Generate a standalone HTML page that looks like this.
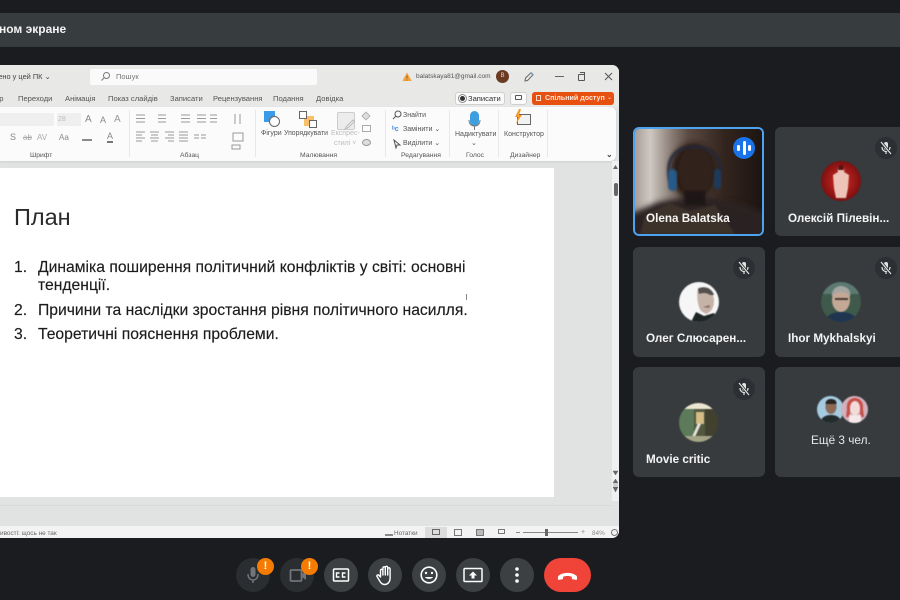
<!DOCTYPE html>
<html><head><meta charset="utf-8">
<style>
html,body{margin:0;padding:0;width:900px;height:600px;overflow:hidden;background:#1a1c20}
body{position:relative;font-family:"Liberation Sans","Noto Sans CJK SC",sans-serif}
.a{position:absolute;white-space:nowrap}
.rb{position:absolute;white-space:nowrap;font-size:7px;color:#555;line-height:9px}
.tile{position:absolute;background:#373b3e;border-radius:6px;overflow:hidden}
.name{position:absolute;color:#f4f4f4;font-size:11.7px;font-weight:bold;white-space:nowrap;line-height:15px}
.mute{position:absolute;width:22px;height:22px;border-radius:50%;background:#2c2f33}
.ctl{position:absolute;top:558px;width:34px;height:34px;border-radius:50%;background:#3c4043}
.ctl svg,.mute svg{position:absolute;left:0;top:0}
.dot{position:absolute;width:17px;height:17px;border-radius:50%;background:#f57c00;color:#fff;font-size:11px;font-weight:bold;text-align:center;line-height:17px}
.sep{position:absolute;top:110px;width:1px;height:47px;background:#e8e8e8}
.st{font-size:15.7px;line-height:18px;color:#1c1c1c;-webkit-text-stroke:.15px #1c1c1c}
#win{position:absolute;left:0;top:0;width:900px;height:600px;filter:blur(.35px)}
</style></head><body>

<div class="a" style="left:0;top:13px;width:900px;height:34px;background:#373c3f"></div>
<div class="a" style="left:-1px;top:21px;color:#f4f4f4;font-size:12px;font-weight:bold;line-height:17px">ном экране</div>

<div id="win">
<!-- window -->
<div class="a" style="left:0;top:65px;width:619px;height:473px;background:#e1e2e2;border-radius:0 7px 7px 0;overflow:hidden">
 <div class="a" style="left:0;top:0;width:619px;height:42px;background:#e8e8e7"></div>
 <div class="a" style="left:0;top:461px;width:619px;height:12px;background:#f3f3f3"></div>
 <div class="a" style="left:0;top:440px;width:612px;height:1px;background:#d9d9d9"></div>
</div>

<!-- title row -->
<div class="rb" style="left:-5px;top:72px;color:#444;font-size:7.4px">кено у цей ПК ⌄</div>
<div class="a" style="left:90px;top:69px;width:227px;height:16px;background:#fafafa;border-radius:2px"></div>
<svg class="a" style="left:100px;top:71px" width="11" height="11" viewBox="0 0 11 11"><circle cx="6.500" cy="4.500" r="3" fill="none" stroke="#777"/><path d="M4.300 6.700L1.500 9.500" stroke="#777"/></svg>
<div class="rb" style="left:116px;top:72px;font-size:7.5px;color:#777">Пошук</div>
<svg class="a" style="left:402px;top:72px" width="10" height="10" viewBox="0 0 10 10"><path d="M5 .5L9.700 9H.3z" fill="#f2a341"/><path d="M5 3.500v3M5 7.500v1" stroke="#7a4a10" stroke-width=".8"/></svg>
<div class="rb" style="left:416px;top:72px;font-size:6.500px;color:#555">balatskaya81@gmail.com</div>
<div class="a" style="left:496px;top:70px;width:13px;height:13px;border-radius:50%;background:#6b3a22;color:#e8d0c0;font-size:6px;line-height:13px;text-align:center">В</div>
<svg class="a" style="left:523px;top:71px" width="12" height="12" viewBox="0 0 12 12"><path d="M2 10l.5-3L8 1.800l2 2L4.500 9.500z" fill="none" stroke="#666"/><path d="M8 1.500l2 2" stroke="#4aa3e0"/></svg>
<div class="a" style="left:555px;top:76px;width:9px;height:1px;background:#666"></div>
<div class="a" style="left:578px;top:74px;width:5px;height:5px;border:1px solid #555;border-radius:1px;background:#e9e9e8"></div>
<div class="a" style="left:580px;top:72px;width:4px;height:4px;border-top:1px solid #555;border-right:1px solid #555"></div>
<svg class="a" style="left:604px;top:72px" width="9" height="9" viewBox="0 0 9 9"><path d="M1 1l7 7M8 1L1 8" stroke="#555"/></svg>

<!-- menu row -->
<div class="rb" style="left:-5px;top:94px;font-size:7.600px">ер</div>
<div class="rb" style="left:18px;top:94px;font-size:7.600px">Переходи</div>
<div class="rb" style="left:65px;top:94px;font-size:7.600px">Анімація</div>
<div class="rb" style="left:108px;top:94px;font-size:7.600px">Показ слайдів</div>
<div class="rb" style="left:170px;top:94px;font-size:7.600px">Записати</div>
<div class="rb" style="left:213px;top:94px;font-size:7.600px">Рецензування</div>
<div class="rb" style="left:273px;top:94px;font-size:7.600px">Подання</div>
<div class="rb" style="left:316px;top:94px;font-size:7.600px">Довідка</div>
<div class="a" style="left:455px;top:92px;width:50px;height:13px;background:#fafafa;border:1px solid #d0d0d0;border-radius:3px;box-sizing:border-box"></div>
<div class="a" style="left:460px;top:96px;width:5px;height:5px;border-radius:50%;background:#333;box-shadow:0 0 0 1px #fff,0 0 0 2px #888"></div>
<div class="rb" style="left:468px;top:94px;font-size:7.600px;color:#333">Записати</div>
<div class="a" style="left:510px;top:92px;width:17px;height:13px;background:#fafafa;border:1px solid #d0d0d0;border-radius:3px;box-sizing:border-box"></div>
<div class="a" style="left:515px;top:95px;width:7px;height:5px;border:1px solid #555;box-sizing:border-box;border-radius:1px"></div>
<div class="a" style="left:532px;top:92px;width:82px;height:13px;background:#e8500f;border-radius:3px"></div>
<div class="rb" style="left:545px;top:94px;font-size:7.100px;font-weight:bold;color:#ffe8dc">Спільний доступ</div>
<div class="a" style="left:536px;top:95px;width:5px;height:6px;border:1px solid #fcd9c8;box-sizing:border-box"></div>
<div class="rb" style="left:607px;top:94px;font-size:6px;color:#ffe8dc">⌄</div>

<!-- ribbon -->
<div class="a" style="left:0;top:107px;width:616px;height:54px;background:#fbfbfb;border-radius:0 6px 6px 0;box-shadow:0 1px 2px rgba(0,0,0,.08)"></div>
<div class="sep" style="left:129px"></div><div class="sep" style="left:255px"></div><div class="sep" style="left:385px"></div><div class="sep" style="left:449px"></div><div class="sep" style="left:498px"></div><div class="sep" style="left:547px"></div>

<!-- font group -->
<div class="a" style="left:0;top:113px;width:54px;height:13px;background:#efefef"></div>
<div class="a" style="left:57px;top:113px;width:24px;height:13px;background:#efefef;color:#bbb;font-size:7px;line-height:13px;text-indent:1px">28</div>
<div class="rb" style="left:85px;top:115px;font-size:10px;color:#888">A</div>
<div class="rb" style="left:100px;top:116px;font-size:9px;color:#888">A</div>
<div class="rb" style="left:114px;top:115px;font-size:10px;color:#999">A</div>
<div class="rb" style="left:10px;top:133px;font-size:9px;color:#888">S</div>
<div class="rb" style="left:23px;top:133px;font-size:8px;color:#aaa"><s>ab</s></div>
<div class="rb" style="left:37px;top:133px;font-size:8px;color:#aaa">AV</div>
<div class="rb" style="left:59px;top:133px;font-size:8px;color:#888">Aa</div>
<div class="a" style="left:82px;top:133px;width:10px;height:8px;border-bottom:2px solid #8a8a8a;box-sizing:border-box"></div>
<div class="rb" style="left:107px;top:132px;font-size:9px;color:#888;border-bottom:2px solid #777;line-height:9px">A</div>
<div class="rb" style="left:30px;top:151px;font-size:6.800px">Шрифт</div>
<div class="rb" style="left:180px;top:151px;font-size:6.800px">Абзац</div>

<!-- paragraph icons -->
<svg class="a" style="left:134px;top:111px" width="115" height="40" viewBox="0 0 115 40"><g stroke="#9a9a9a" stroke-width="1" fill="none">
<path d="M2 4h9M2 7.500h9M2 11h9M24 4h8M24 7.500h8M24 11h8M47 4h9M47 7.500h9M47 11h9M63 4h9M63 7.500h9M63 11h9M76 4h7M76 7.500h7M76 11h7"/>
<path d="M2 21h9M2 24h6M2 27h9M2 30h6M16 21h9M17 24h7M16 27h9M17 30h7M31 21h9M34 24h6M31 27h9M34 30h6M45 21h9M45 24h9M45 27h9M45 30h9M60 24h5M67 24h5M60 27h5M67 27h5"/>
<path d="M101 3v10M106 3v10"/><rect x="99" y="22" width="10" height="8"/><rect x="98" y="34" width="8" height="4"/></g></svg>

<!-- drawing group -->
<div class="a" style="left:264px;top:111px;width:11px;height:11px;background:#3b9be8"></div>
<div class="a" style="left:269px;top:116px;width:11px;height:11px;border-radius:50%;background:#fff;border:1px solid #666;box-sizing:border-box"></div>
<div class="rb" style="left:261px;top:129px;font-size:7px">Фігури</div>
<div class="a" style="left:304px;top:116px;width:10px;height:10px;background:#f9c06a;box-sizing:border-box"></div>
<div class="a" style="left:299px;top:111px;width:8px;height:8px;background:#fff;border:1px solid #666;box-sizing:border-box"></div>
<div class="a" style="left:309px;top:120px;width:8px;height:8px;background:#fff;border:1px solid #666;box-sizing:border-box"></div>
<div class="rb" style="left:284px;top:129px;font-size:6.900px">Упорядкувати</div>
<div class="a" style="left:337px;top:112px;width:16px;height:16px;background:#ececec;border:1px solid #ccc;border-radius:2px"></div>
<svg class="a" style="left:344px;top:118px" width="12" height="12" viewBox="0 0 12 12"><path d="M1 11l2-3 6-6 1.500 1.500-6 6z" fill="#eee" stroke="#bbb"/></svg>
<div class="rb" style="left:331px;top:129px;font-size:7px;color:#bbb">Експрес-</div>
<div class="rb" style="left:334px;top:139px;font-size:7px;color:#bbb">стилі ˅</div>
<div class="a" style="left:362px;top:112px;width:8px;height:8px;background:#ddd;border:1px solid #aaa;box-sizing:border-box;transform:rotate(45deg) scale(.8)"></div>
<div class="a" style="left:362px;top:125px;width:9px;height:7px;border:1px solid #aaa;box-sizing:border-box"></div>
<div class="a" style="left:362px;top:139px;width:9px;height:7px;border:1px solid #999;border-radius:50%;background:#ddd;box-sizing:border-box"></div>
<div class="rb" style="left:300px;top:151px;font-size:6.800px">Малювання</div>

<!-- editing -->
<svg class="a" style="left:392px;top:110px" width="10" height="10" viewBox="0 0 10 10"><circle cx="6" cy="4" r="3" fill="none" stroke="#555"/><path d="M3.800 6.200L1 9" stroke="#555"/></svg>
<div class="rb" style="left:403px;top:111px;font-size:7px">Знайти</div>
<div class="rb" style="left:392px;top:125px;font-size:7px;color:#4a8fe0;font-weight:bold">ᵇc</div>
<div class="rb" style="left:403px;top:125px;font-size:7px">Замінити ⌄</div>
<svg class="a" style="left:393px;top:139px" width="9" height="10" viewBox="0 0 9 10"><path d="M1 1l6 5H4l-1 3z" fill="none" stroke="#555"/></svg>
<div class="rb" style="left:403px;top:139px;font-size:7px">Виділити ⌄</div>
<div class="rb" style="left:401px;top:151px;font-size:6.800px">Редагування</div>

<!-- voice -->
<div class="a" style="left:470px;top:111px;width:9px;height:15px;background:#3d9fe0;border-radius:5px"></div>
<svg class="a" style="left:467px;top:118px" width="15" height="14" viewBox="0 0 15 14"><path d="M2 2c0 4 2.500 6 5.500 6S13 6 13 2M7.500 8v4" fill="none" stroke="#777"/></svg>
<div class="rb" style="left:455px;top:130px;font-size:7px">Надиктувати</div>
<div class="rb" style="left:471px;top:139px;font-size:7px">⌄</div>
<div class="rb" style="left:466px;top:151px;font-size:6.800px">Голос</div>

<!-- designer -->
<div class="a" style="left:517px;top:114px;width:14px;height:11px;background:#f2f2f2;border:1px solid #666;box-sizing:border-box"></div>
<svg class="a" style="left:514px;top:109px" width="9" height="15" viewBox="0 0 9 15"><path d="M5 0L1 8h3L2 15l6-9H5l2-6z" fill="#f29a2e"/></svg>
<div class="rb" style="left:504px;top:130px;font-size:7px">Конструктор</div>
<div class="rb" style="left:510px;top:151px;font-size:6.800px">Дизайнер</div>
<div class="rb" style="left:606px;top:150px;font-size:8px;font-weight:bold;color:#444">⌄</div>

<!-- slide -->
<div class="a" style="left:0;top:168px;width:554px;height:329px;background:#fff"></div>
<div class="a" style="left:14px;top:202px;font-size:23.500px;line-height:30px;color:#2a2a2a">План</div>
<div class="a st" style="left:14px;top:259px">1.</div>
<div class="a st" style="left:38px;top:259px">Динаміка поширення політичний конфліктів у світі: основні</div>
<div class="a st" style="left:38px;top:277px">тенденції.</div>
<div class="a st" style="left:14px;top:302px">2.</div>
<div class="a st" style="left:38px;top:302px">Причини та наслідки зростання рівня політичного насилля.</div>
<div class="a st" style="left:14px;top:326px">3.</div>
<div class="a st" style="left:38px;top:326px">Теоретичні пояснення проблеми.</div>
<div class="a" style="left:466px;top:294px;width:1px;height:6px;background:#888"></div>

<!-- scrollbar -->
<div class="a" style="left:612px;top:161px;width:7px;height:340px;background:#f0f0f0"></div>
<div class="a" style="left:614px;top:183px;width:4px;height:13px;background:#666;border-radius:2px"></div>
<svg class="a" style="left:612px;top:164px" width="7" height="6" viewBox="0 0 7 6"><path d="M3.500 1L6 5H1z" fill="#666"/></svg>
<svg class="a" style="left:612px;top:470px" width="7" height="24" viewBox="0 0 7 24"><path d="M1 1h5L3.500 5zM1 13h5L3.500 9zM1 15h5M1 17h5L3.500 22z" fill="#666" stroke="#666" stroke-width=".5"/></svg>

<!-- status -->
<div class="rb" style="left:0;top:529px;font-size:6.400px;color:#666">ивості: щось не так</div>
<div class="a" style="left:385px;top:527px;width:8px;height:9px;border-bottom:2px solid #888;box-sizing:border-box"></div>
<div class="rb" style="left:394px;top:529px;font-size:6.400px;color:#666">Нотатки</div>
<div class="a" style="left:425px;top:527px;width:22px;height:11px;background:#dcdcdc"></div>
<div class="a" style="left:432px;top:529px;width:8px;height:6px;border:1px solid #666;box-sizing:border-box"></div>
<div class="a" style="left:454px;top:529px;width:8px;height:7px;border:1px solid #777;box-sizing:border-box"></div>
<div class="a" style="left:476px;top:529px;width:8px;height:7px;border:1px solid #777;background:#bbb;box-sizing:border-box"></div>
<div class="a" style="left:498px;top:529px;width:7px;height:5px;border:1px solid #777;box-sizing:border-box"></div>
<div class="a" style="left:516px;top:532px;width:4px;height:1px;background:#888"></div>
<div class="a" style="left:523px;top:532px;width:55px;height:1px;background:#888"></div>
<div class="a" style="left:545px;top:529px;width:3px;height:7px;background:#666"></div>
<div class="rb" style="left:581px;top:528px;font-size:7px;color:#888">+</div>
<div class="rb" style="left:592px;top:529px;font-size:6.400px;color:#888">84%</div>
<div class="a" style="left:611px;top:529px;width:5px;height:5px;border:1px solid #777;border-radius:50%"></div>
</div>

<!-- tiles -->
<div class="tile" style="left:633px;top:127px;width:131px;height:109px;background:#2a2421;box-sizing:border-box;border:2px solid #4ea3f1">
 <svg width="127" height="105" style="position:absolute;left:0;top:0" viewBox="0 0 127 105">
  <defs>
   <linearGradient id="bg" x1="0" x2="1" y1="0" y2="0"><stop offset="0" stop-color="#a89e97"/><stop offset=".12" stop-color="#cfc8c2"/><stop offset=".28" stop-color="#8c8078"/><stop offset=".42" stop-color="#5a4a42"/><stop offset=".7" stop-color="#33241e"/><stop offset="1" stop-color="#1d1512"/></linearGradient>
   <filter id="bl"><feGaussianBlur stdDeviation="3"/></filter>
   <filter id="bl2"><feGaussianBlur stdDeviation="1"/></filter>
  </defs>
  <rect width="127" height="105" fill="url(#bg)"/>
  <g filter="url(#bl)">
   <path d="M-5 110V85l28-12 25-4h30l30 6 30 12v23z" fill="#2b2320"/>
   <ellipse cx="58" cy="42" rx="23" ry="28" fill="#2a1d19"/>
  </g>
  <path d="M10 86l25-12 20 8 25-6 20 29H5z" fill="#3c302c" filter="url(#bl2)"/>
  <ellipse cx="60" cy="42" rx="17" ry="24" fill="#33231e" filter="url(#bl2)"/>
  <rect x="50" y="62" width="20" height="14" fill="#1f1513" filter="url(#bl2)"/>
  <path d="M35 52C29 26 44 18 59 18S90 26 84 52" fill="none" stroke="#20283a" stroke-width="2.500" filter="url(#bl2)"/>
  <rect x="33" y="40" width="9" height="22" rx="4.500" fill="#285a88" filter="url(#bl2)"/>
  <rect x="79" y="40" width="7" height="20" rx="3" fill="#1d3a5c" filter="url(#bl2)"/>
 </svg>
 <div class="name" style="left:11px;top:82px">Olena Balatska</div>
 <div style="position:absolute;left:98px;top:8px;width:22px;height:22px;border-radius:50%;background:#1a73e8">
  <div style="position:absolute;left:4px;top:8px;width:3px;height:6px;background:#fff;border-radius:2px"></div>
  <div style="position:absolute;left:9.500px;top:4px;width:3px;height:14px;background:#fff;border-radius:2px"></div>
  <div style="position:absolute;left:15px;top:8px;width:3px;height:6px;background:#fff;border-radius:2px"></div>
 </div>
</div>

<div class="tile" style="left:775px;top:127px;width:135px;height:109px"></div>
<div class="tile" style="left:633px;top:247px;width:132px;height:110px"></div>
<div class="tile" style="left:775px;top:247px;width:135px;height:110px"></div>
<div class="tile" style="left:633px;top:367px;width:132px;height:110px"></div>
<div class="tile" style="left:775px;top:367px;width:135px;height:110px"></div>

<!-- mute icons -->
<svg width="0" height="0" style="position:absolute"><defs><g id="mu"><rect x="9" y="5" width="4" height="8" rx="2" fill="#e4e4e4"/><path d="M7 10c0 3 2 4.500 4 4.500s4-1.500 4-4.500M11 14.500V17" fill="none" stroke="#e4e4e4" stroke-width="1.200"/><path d="M6 5l10 12" stroke="#2c2f33" stroke-width="2.800"/><path d="M6 5l10 12" stroke="#e4e4e4" stroke-width="1.200"/></g></defs></svg>
<div class="mute" style="left:875px;top:137px"><svg width="22" height="22"><use href="#mu"/></svg></div>
<div class="mute" style="left:733px;top:257px"><svg width="22" height="22"><use href="#mu"/></svg></div>
<div class="mute" style="left:875px;top:257px"><svg width="22" height="22"><use href="#mu"/></svg></div>
<div class="mute" style="left:733px;top:378px"><svg width="22" height="22"><use href="#mu"/></svg></div>

<!-- avatars -->
<svg class="a" style="left:821px;top:161px;filter:blur(.5px)" width="40" height="40" viewBox="0 0 40 40"><defs><radialGradient id="r1"><stop offset="0" stop-color="#d82a24"/><stop offset="1" stop-color="#7d1010"/></radialGradient><clipPath id="c1"><circle cx="20" cy="20" r="20"/></clipPath></defs><circle cx="20" cy="20" r="20" fill="url(#r1)"/><path d="M20 5c3 0 4 3 3 6l5 3-1 13-2 10H15l-2-10-1-13 5-3c-1-3 0-6 3-6z" fill="#eec4b8" clip-path="url(#c1)"/><path d="M20 4c2 0 3 2 3 5h-6c0-3 1-5 3-5z" fill="#5a1210"/></svg>

<svg class="a" style="left:679px;top:282px;filter:blur(.5px)" width="40" height="40" viewBox="0 0 40 40"><defs><clipPath id="c2"><circle cx="20" cy="20" r="20"/></clipPath></defs><g clip-path="url(#c2)"><rect width="40" height="40" fill="#f6f6f6"/><path d="M19 6c8-3 16 3 16 13 0 7-3 11-8 13l-5-3c-3-4-5-15-3-23z" fill="#c6b3a8"/><path d="M19 7c6-4 14-1 16 6l-4 0c-4-3-8-2-11-1z" fill="#54504e"/><path d="M12 40l5-10 8 4 10-3 5 9z" fill="#1d2624"/><path d="M24 25l7-2-1 3z" fill="#8a6a60"/></g></svg>

<svg class="a" style="left:821px;top:282px;filter:blur(.5px)" width="40" height="40" viewBox="0 0 40 40"><defs><clipPath id="c3"><circle cx="20" cy="20" r="20"/></clipPath></defs><g clip-path="url(#c3)"><rect width="40" height="40" fill="#3f5a4a"/><rect y="0" width="40" height="12" fill="#5d7a70"/><ellipse cx="20" cy="18" rx="9" ry="12" fill="#c4a896"/><path d="M11 15c-1-8 5-11 9-11s11 3 9 11c-2-4-5-5-9-5s-7 1-9 5z" fill="#a4a6a2"/><path d="M4 40c1-7 8-10 16-10s15 3 16 10z" fill="#1f3550"/><rect x="14" y="16" width="13" height="2" fill="#4a3a32"/></g></svg>

<svg class="a" style="left:679px;top:403px;filter:blur(.5px)" width="39" height="39" viewBox="0 0 39 39"><defs><clipPath id="c4"><circle cx="19.500" cy="19.500" r="19.500"/></clipPath></defs><g clip-path="url(#c4)"><rect width="39" height="39" fill="#51583f"/><rect y="0" width="39" height="6" fill="#ece6d2"/><rect x="0" y="6" width="15" height="33" fill="#5d7a5a"/><rect x="26" y="6" width="13" height="33" fill="#42412f"/><path d="M17 9h8v12h-8z" fill="#d4bc84"/><path d="M19 20l-6 14h3l6-13z" fill="#e4e2da"/><rect y="33" width="39" height="6" fill="#a5a588"/></g></svg>

<svg class="a" style="left:817px;top:396px;filter:blur(.5px)" width="27" height="27" viewBox="0 0 27 27"><defs><clipPath id="c5"><circle cx="13.500" cy="13.500" r="13.500"/></clipPath></defs><g clip-path="url(#c5)"><rect width="27" height="27" fill="#a5cbe0"/><ellipse cx="14" cy="11" rx="5.500" ry="7" fill="#8c6a58"/><path d="M8.500 8c0-4 3-5 5.500-5s6 1 5.500 5z" fill="#2a2623"/><path d="M3 27c1-6 6-8 11-8s10 2 10 8z" fill="#232c2c"/></g></svg>
<svg class="a" style="left:841px;top:396px;filter:blur(.5px)" width="27" height="27" viewBox="0 0 27 27"><defs><clipPath id="c6"><circle cx="13.500" cy="13.500" r="13.500"/></clipPath></defs><g clip-path="url(#c6)"><rect width="27" height="27" fill="#d4b0bb"/><path d="M6 13c-1-8 4-11 8-11s9 3 8 11l1 8h-4V12H9v9H5z" fill="#c5504a"/><ellipse cx="14" cy="12" rx="5" ry="7" fill="#f3dcd8"/><rect x="8" y="19" width="12" height="8" fill="#f4e8ea"/></g></svg>

<!-- names -->
<div class="name" style="left:788px;top:211px">Олексій Пілевін...</div>
<div class="name" style="left:646px;top:331px">Олег Слюсарен...</div>
<div class="name" style="left:788px;top:331px">Ihor Mykhalskyi</div>
<div class="name" style="left:646px;top:452px">Movie critic</div>
<div class="name" style="left:811px;top:433px;font-weight:normal;font-size:11.800px;color:#e8e8e8">Ещё 3 чел.</div>

<!-- controls -->
<div class="ctl" style="left:236px;background:#2b2e31"><svg width="34" height="34"><rect x="14.500" y="9" width="5" height="10" rx="2.500" fill="#71757a"/><path d="M12 16c0 4 2.500 6 5 6s5-2 5-6M17 22v3" fill="none" stroke="#71757a" stroke-width="1.500"/></svg></div>
<div class="ctl" style="left:280px;background:#2b2e31"><svg width="34" height="34"><rect x="10.500" y="12" width="11" height="11" rx="1" fill="none" stroke="#71757a" stroke-width="1.800"/><path d="M22 16l4-3v9l-4-3z" fill="#71757a"/></svg></div>
<div class="dot" style="left:257px;top:558px">!</div>
<div class="dot" style="left:301px;top:558px">!</div>
<div class="ctl" style="left:324px"><svg width="34" height="34"><rect x="9.500" y="11" width="15" height="12" rx="1" fill="none" stroke="#fff" stroke-width="1.500"/><path d="M15.500 15h-3v4h3M21.500 15h-3v4h3" fill="none" stroke="#fff" stroke-width="1.400"/></svg></div>
<div class="ctl" style="left:368px"><svg width="34" height="34"><path d="M12.500 19v-6.500a1.200 1.200 0 0 1 2.400 0V17V10a1.200 1.200 0 0 1 2.400 0v7V9.500a1.200 1.200 0 0 1 2.400 0V17v-6a1.200 1.200 0 0 1 2.400 0v9c0 4-2.400 6.500-5.500 6.500-2.500 0-3.700-1.500-4.600-3l-3-5c-.7-1.300 1.200-2.300 2.100-1z" fill="none" stroke="#fff" stroke-width="1.400" stroke-linejoin="round"/></svg></div>
<div class="ctl" style="left:412px"><svg width="34" height="34"><circle cx="17" cy="17" r="7.800" fill="none" stroke="#fff" stroke-width="1.600"/><circle cx="14" cy="15" r="1.200" fill="#fff"/><circle cx="20" cy="15" r="1.200" fill="#fff"/><path d="M13 19c1 2.500 7 2.500 8 0z" fill="#fff"/></svg></div>
<div class="ctl" style="left:456px"><svg width="34" height="34"><rect x="8" y="10.500" width="18" height="13" rx="1" fill="none" stroke="#fff" stroke-width="1.500"/><path d="M17 13.500l4 4h-2.500v3h-3v-3H13z" fill="#fff"/></svg></div>
<div class="ctl" style="left:500px"><svg width="34" height="34"><circle cx="17" cy="11" r="1.800" fill="#fff"/><circle cx="17" cy="17" r="1.800" fill="#fff"/><circle cx="17" cy="23" r="1.800" fill="#fff"/></svg></div>
<div class="a" style="left:544px;top:558px;width:47px;height:34px;border-radius:17px;background:#f04438"><svg width="47" height="34" style="position:absolute;left:0;top:0"><path d="M14 19.500c0-.8.2-1.500.8-2 4.500-3.500 12.900-3.500 17.400 0 .6.500.8 1.200.8 2v1.500c0 .5-.5 1-1 .9l-3.500-.7c-.4-.1-.7-.5-.7-.9v-1.500c-2.500-1-6.200-1-8.700 0v1.500c0 .4-.3.800-.7.900l-3.500.7c-.5.100-1-.4-1-.9z" fill="#fff"/></svg></div>

</body></html>
